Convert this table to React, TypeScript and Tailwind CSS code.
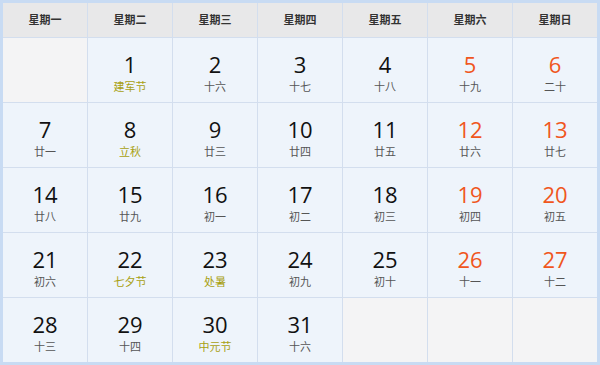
import React from 'react'

const weekdays = ['星期一', '星期二', '星期三', '星期四', '星期五', '星期六', '星期日']

// [day, lunar, isHoliday]
const days: [number, string, boolean][] = [
  [1, '建军节', true], [2, '十六', false], [3, '十七', false], [4, '十八', false], [5, '十九', false], [6, '二十', false],
  [7, '廿一', false], [8, '立秋', true], [9, '廿三', false], [10, '廿四', false], [11, '廿五', false], [12, '廿六', false], [13, '廿七', false],
  [14, '廿八', false], [15, '廿九', false], [16, '初一', false], [17, '初二', false], [18, '初三', false], [19, '初四', false], [20, '初五', false],
  [21, '初六', false], [22, '七夕节', true], [23, '处暑', true], [24, '初九', false], [25, '初十', false], [26, '十一', false], [27, '十二', false],
  [28, '十三', false], [29, '十四', false], [30, '中元节', true], [31, '十六', false],
]

const lead = 1
const cells: ([number, string, boolean] | null)[] = [
  ...Array(lead).fill(null),
  ...days,
]
while (cells.length < 35) cells.push(null)

export default function App() {
  return (
    <div className="w-[600px] h-[365px] border-[3px] border-[#c8dbf3] bg-white" style={{ fontFamily: '"Open Sans", "Noto Sans CJK SC", sans-serif' }}>
      <div className="grid grid-cols-[repeat(7,84px)] grid-rows-[34px_repeat(5,64px)] gap-px bg-[#d3deee]">
        {weekdays.map(w => (
          <div key={w} className="flex items-center justify-center bg-[#e8e8e9] text-[11px] font-bold text-[#333]">
            {w}
          </div>
        ))}
        {cells.map((c, i) => {
          if (!c) return <div key={i} className="bg-[#f4f4f5]" />
          const col = i % 7
          const weekend = col >= 5
          return (
            <div key={i} className="flex flex-col items-center pt-[11px] bg-[#eef4fb]">
              <span className={`text-[22px] leading-[30px] ${weekend ? 'text-[#f0561d]' : 'text-[#111]'}`}>{c[0]}</span>
              <span className={`text-[11px] leading-[15px] ${c[2] ? 'text-[#a8a010]' : 'text-[#555]'}`}>{c[1]}</span>
            </div>
          )
        })}
      </div>
    </div>
  )
}
